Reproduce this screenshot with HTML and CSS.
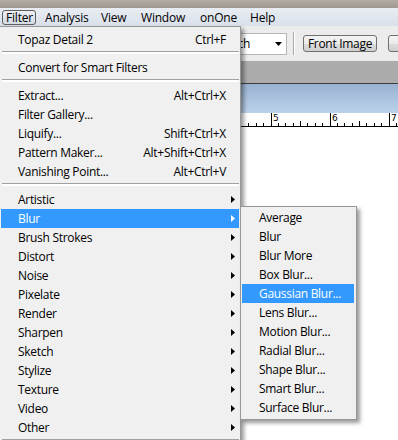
FILE: index.html
```html
<!DOCTYPE html>
<html>
<head>
<meta charset="utf-8">
<link rel="stylesheet" href="styles.css">
</head>
<body>
<div class="screen">
  <div class="chrome"></div>
  <nav class="menubar">
    <span class="mb-item active">Filter</span>
    <span class="mb-item">Analysis</span>
    <span class="mb-item">View</span>
    <span class="mb-item">Window</span>
    <span class="mb-item">onOne</span>
    <span class="mb-item">Help</span>
  </nav>
  <div class="workspace">
    <div class="options">
      <div class="select">
        <span class="select-text">pixels/inch</span>
        <svg class="select-arrow" width="7" height="4" viewBox="0 0 7 4"><polygon points="0,0 7,0 3.5,4" fill="#000"/></svg>
      </div>
      <div class="vsep"></div>
      <div class="btn">Front Image</div>
      <div class="btn btn-clear" aria-label="Clear"></div>
    </div>
    <div class="gap"></div>
    <div class="doc">
      <div class="doc-title"></div>
      <div class="ruler">
        <svg width="157" height="14" viewBox="0 0 157 14">
          <g stroke="#000" stroke-width="1" shape-rendering="crispEdges">
            <line x1="0" y1="13.5" x2="157" y2="13.5"/>
            <line x1="7.5" y1="10" x2="7.5" y2="14"/>
            <line x1="15.5" y1="10" x2="15.5" y2="14"/>
            <line x1="22.5" y1="10" x2="22.5" y2="14"/>
            <line x1="30.5" y1="0" x2="30.5" y2="14"/>
            <line x1="37.5" y1="10" x2="37.5" y2="14"/>
            <line x1="44.5" y1="10" x2="44.5" y2="14"/>
            <line x1="52.5" y1="10" x2="52.5" y2="14"/>
            <line x1="59.5" y1="8" x2="59.5" y2="14"/>
            <line x1="66.5" y1="10" x2="66.5" y2="14"/>
            <line x1="74.5" y1="10" x2="74.5" y2="14"/>
            <line x1="81.5" y1="10" x2="81.5" y2="14"/>
            <line x1="89.5" y1="0" x2="89.5" y2="14"/>
            <line x1="96.5" y1="10" x2="96.5" y2="14"/>
            <line x1="103.5" y1="10" x2="103.5" y2="14"/>
            <line x1="111.5" y1="10" x2="111.5" y2="14"/>
            <line x1="118.5" y1="8" x2="118.5" y2="14"/>
            <line x1="125.5" y1="10" x2="125.5" y2="14"/>
            <line x1="133.5" y1="10" x2="133.5" y2="14"/>
            <line x1="140.5" y1="10" x2="140.5" y2="14"/>
            <line x1="148.5" y1="0" x2="148.5" y2="14"/>
            <line x1="155.5" y1="10" x2="155.5" y2="14"/>
          </g>
          <g class="ruler-num">
            <text x="32" y="8">5</text>
            <text x="91" y="8">6</text>
            <text x="150" y="8">7</text>
          </g>
        </svg>
      </div>
      <div class="canvas"></div>
    </div>
  </div>

  <div class="menu main">
    <div class="mi"><span>Topaz Detail 2</span><span>Ctrl+F</span></div>
    <div class="sep"></div>
    <div class="mi"><span>Convert for Smart Filters</span></div>
    <div class="sep"></div>
    <div class="mi"><span>Extract...</span><span>Alt+Ctrl+X</span></div>
    <div class="mi"><span>Filter Gallery...</span></div>
    <div class="mi"><span>Liquify...</span><span>Shift+Ctrl+X</span></div>
    <div class="mi"><span>Pattern Maker...</span><span>Alt+Shift+Ctrl+X</span></div>
    <div class="mi"><span>Vanishing Point...</span><span>Alt+Ctrl+V</span></div>
    <div class="sep"></div>
    <div class="mi"><span>Artistic</span><svg class="arrow" width="4" height="7" viewBox="0 0 4 7"><polygon points="0,0 4,3.5 0,7"/></svg></div>
    <div class="mi hl"><span>Blur</span><svg class="arrow" width="4" height="7" viewBox="0 0 4 7"><polygon points="0,0 4,3.5 0,7"/></svg></div>
    <div class="mi"><span>Brush Strokes</span><svg class="arrow" width="4" height="7" viewBox="0 0 4 7"><polygon points="0,0 4,3.5 0,7"/></svg></div>
    <div class="mi"><span>Distort</span><svg class="arrow" width="4" height="7" viewBox="0 0 4 7"><polygon points="0,0 4,3.5 0,7"/></svg></div>
    <div class="mi"><span>Noise</span><svg class="arrow" width="4" height="7" viewBox="0 0 4 7"><polygon points="0,0 4,3.5 0,7"/></svg></div>
    <div class="mi"><span>Pixelate</span><svg class="arrow" width="4" height="7" viewBox="0 0 4 7"><polygon points="0,0 4,3.5 0,7"/></svg></div>
    <div class="mi"><span>Render</span><svg class="arrow" width="4" height="7" viewBox="0 0 4 7"><polygon points="0,0 4,3.5 0,7"/></svg></div>
    <div class="mi"><span>Sharpen</span><svg class="arrow" width="4" height="7" viewBox="0 0 4 7"><polygon points="0,0 4,3.5 0,7"/></svg></div>
    <div class="mi"><span>Sketch</span><svg class="arrow" width="4" height="7" viewBox="0 0 4 7"><polygon points="0,0 4,3.5 0,7"/></svg></div>
    <div class="mi"><span>Stylize</span><svg class="arrow" width="4" height="7" viewBox="0 0 4 7"><polygon points="0,0 4,3.5 0,7"/></svg></div>
    <div class="mi"><span>Texture</span><svg class="arrow" width="4" height="7" viewBox="0 0 4 7"><polygon points="0,0 4,3.5 0,7"/></svg></div>
    <div class="mi"><span>Video</span><svg class="arrow" width="4" height="7" viewBox="0 0 4 7"><polygon points="0,0 4,3.5 0,7"/></svg></div>
    <div class="mi"><span>Other</span><svg class="arrow" width="4" height="7" viewBox="0 0 4 7"><polygon points="0,0 4,3.5 0,7"/></svg></div>
    <div class="sep"></div>
  </div>

  <div class="menu sub">
    <div class="mi"><span>Average</span></div>
    <div class="mi"><span>Blur</span></div>
    <div class="mi"><span>Blur More</span></div>
    <div class="mi"><span>Box Blur...</span></div>
    <div class="mi hl"><span>Gaussian Blur...</span></div>
    <div class="mi"><span>Lens Blur...</span></div>
    <div class="mi"><span>Motion Blur...</span></div>
    <div class="mi"><span>Radial Blur...</span></div>
    <div class="mi"><span>Shape Blur...</span></div>
    <div class="mi"><span>Smart Blur...</span></div>
    <div class="mi"><span>Surface Blur...</span></div>
  </div>
</div>
</body>
</html>
```

FILE: styles.css
```css
* { box-sizing: border-box; }
html, body { margin: 0; padding: 0; }
body {
  width: 398px;
  height: 440px;
  overflow: hidden;
  font-family: "Open Sans", "Noto Sans", sans-serif;
  font-size: 12px;
  letter-spacing: -0.3px;
  color: #000;
  background: #fff;
}
.screen {
  position: relative;
  width: 398px;
  height: 440px;
  overflow: hidden;
  display: flex;
  flex-direction: column;
}
.chrome {
  flex: none;
  height: 8px;
  background: linear-gradient(#b2aca3, #9d978e);
}
.menubar {
  flex: none;
  height: 18px;
  display: grid;
  grid-template-columns: 39px 56px 40px 59px 50px auto;
  align-items: center;
  padding-left: 2px;
  background: linear-gradient(#e9edf3, #d9e0ea);
  letter-spacing: -0.2px;
}
.mb-item {
  justify-self: start;
  padding: 0 4px;
  height: 15px;
  line-height: 15px;
  white-space: nowrap;
}
.mb-item.active {
  width: 34px;
  padding: 0 3px;
  line-height: 13px;
  border: 1px solid #5e5e5e;
  border-radius: 3px;
  background: linear-gradient(#eceff3, #d5dbe3);
}
.workspace {
  flex: 1;
  display: flex;
  flex-direction: column;
  background: #ababab;
}
.options {
  flex: none;
  height: 35px;
  display: flex;
  align-items: center;
  padding-left: 186px;
  background: #ececec;
  white-space: nowrap;
  overflow: hidden;
}
.options > * { flex: none; }
.select {
  width: 101px;
  height: 22px;
  display: flex;
  align-items: center;
  padding: 0 4px 0 0;
  background: #fff;
  border: 1px solid #b5b7bd;
  overflow: hidden;
}
.select-text {
  flex: none;
  width: 63px;
  text-align: right;
  overflow: hidden;
}
.select-arrow { flex: none; margin-left: auto; }
.vsep {
  margin-left: 6px;
  width: 2px;
  height: 23px;
  border-left: 1px solid #a9a9a9;
  background: #fff;
}
.btn {
  margin-left: 8px;
  width: 74px;
  height: 17px;
  line-height: 15px;
  text-align: center;
  border: 1px solid #707070;
  border-radius: 3px;
  background: linear-gradient(#f4f4f4 0%, #ebebeb 50%, #dddddd 51%, #cfcfcf 100%);
}
.btn-clear {
  margin-left: 11px;
  width: 50px;
}
.gap {
  flex: none;
  height: 22px;
}
.doc {
  flex: 1;
  margin-left: 241px;
  display: flex;
  flex-direction: column;
  border-top: 1px solid #3d3d3d;
  background: #fff;
}
.doc-title {
  flex: none;
  height: 29px;
  background: linear-gradient(#99b2d1, #bcd2eb);
}
.ruler {
  flex: none;
  height: 14px;
  background: #fff;
}
.ruler svg { display: block; }
.ruler-num {
  font-family: "DejaVu Sans", sans-serif;
  font-size: 9px;
  fill: #000;
}
.canvas {
  flex: 1;
  background: #fff;
}
.menu {
  position: absolute;
  background: #f0f0f0;
  border: 1px solid #979797;
  box-shadow: 3px 3px 4px rgba(0, 0, 0, 0.4);
}
.menu.main {
  left: -1px;
  top: 26px;
  width: 242px;
  padding: 3px 1px 0 1px;
}
.menu.sub {
  left: 240px;
  top: 206px;
  width: 117px;
  padding: 1px 2px 2px 1px;
}
.mi {
  position: relative;
  height: 19px;
  line-height: 19px;
  padding: 0 13px 0 17px;
  display: flex;
  justify-content: space-between;
  white-space: nowrap;
}
.mi.hl {
  background: #3399ff;
  color: #fff;
}
.mi .arrow {
  position: absolute;
  right: 4px;
  top: 6px;
  fill: #000;
}
.mi.hl .arrow { fill: #fff; }
.sep {
  height: 9px;
  padding-top: 2px;
  margin-left: 1px;
}
.sep::before {
  content: "";
  display: block;
  height: 2px;
  border-top: 1px solid #a0a0a0;
  background: #fff;
}
```
